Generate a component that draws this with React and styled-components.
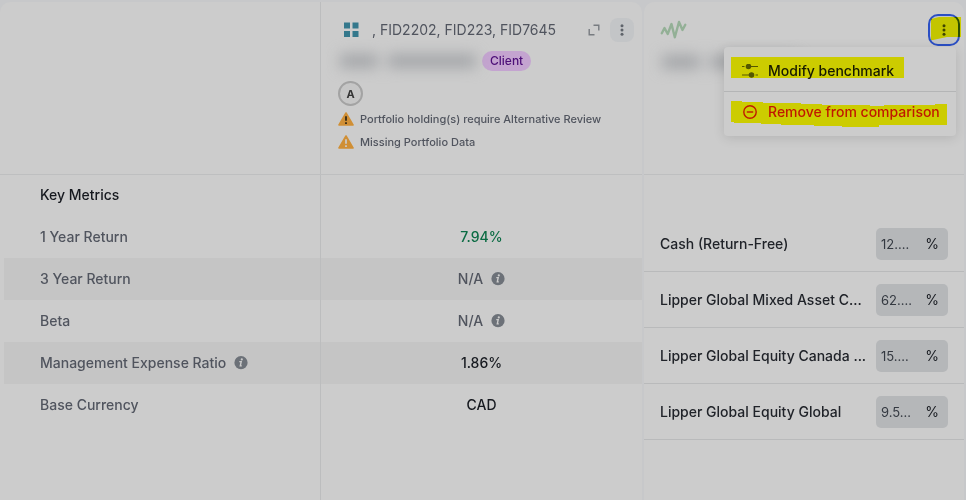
import React from "react";
import styled, { createGlobalStyle } from "styled-components";

const GlobalStyle = createGlobalStyle`
  *, *::before, *::after { box-sizing: border-box; }
  body {
    margin: 0;
    background: #c7c8ca;
    color: #16191f;
    font-family: Inter, "Liberation Sans", sans-serif;
    font-size: 14px;
    font-weight: 500;
    line-height: 20px;
  }
  button, input { font: inherit; color: inherit; }
`;

const Page = styled.main`
  display: grid;
  grid-template-columns: minmax(0, 2fr) minmax(0, 1fr);
  gap: 2px;
  min-height: 100vh;
  padding: 2px 1px 0 0;
`;

const MetricsPanel = styled.div`
  display: flex;
  flex-direction: column;
  background: linear-gradient(to right, transparent 50%, #bcbdbe 50%, #bcbdbe calc(50% + 1px), transparent 0) -1px 0 / 100% 100% no-repeat, #cccccc;
  border-radius: 10px 10px 0 0;
`;

const MetricsTable = styled.table`
  width: 100%;
  table-layout: fixed;
  border-collapse: collapse;
`;

const HeadCell = styled.th`
  height: 172px;
  padding: 16px 8px 0 17px;
  vertical-align: top;
  text-align: left;
  font-weight: 500;
`;

const MetricRow = styled.tr`
  height: 42px;
  border-top: ${(p) => (p.$ruled ? "1px solid #bebfc0" : "0")};
`;

const MetricName = styled.th`
  padding: 0 0 0 40px;
  text-align: left;
  font-weight: 500;
  color: ${(p) => (p.$strong ? "#16191f" : "#50545e")};
  background: ${(p) => (p.$shaded ? "linear-gradient(#c5c5c5, #c5c5c5) 4px 0 / calc(100% - 5px) 100% no-repeat" : "none")};
`;

const tones = { good: "#0b6b43", muted: "#50545e", plain: "#16191f" };

const MetricValue = styled.td`
  padding: 0;
  text-align: center;
  color: ${(p) => tones[p.$tone]};
  background: ${(p) => (p.$shaded ? "#c5c5c5" : "none")};
`;

const WithInfo = styled.span`
  display: inline-flex;
  align-items: center;
  gap: 8px;
`;

const HeaderBar = styled.div`
  display: flex;
  align-items: center;
  gap: 4px;
  height: 24px;
`;

const BrandSlot = styled.span`
  display: flex;
  flex: none;
  width: 30px;
  padding-left: 5px;
`;

const AccountIds = styled.span`
  flex: 1;
  min-width: 0;
  overflow: hidden;
  white-space: nowrap;
  text-overflow: ellipsis;
  color: #50545e;
  font-weight: 400;
`;

const IconButton = styled.button`
  display: flex;
  flex: none;
  align-items: center;
  justify-content: center;
  width: 24px;
  height: 24px;
  padding: 0;
  border: 0;
  border-radius: 8px;
  background: ${(p) => (p.$filled ? "#c3c5c7" : "transparent")};
  color: #5f646b;
`;

const FocusedButton = styled.button`
  position: relative;
  display: flex;
  flex: none;
  align-items: center;
  justify-content: center;
  width: 32px;
  height: 32px;
  margin-left: auto;
  padding: 0;
  border: 2px solid #2b4fc4;
  border-radius: 10px;
  background: #c3c5c7;
  color: #3f444b;
`;

const Marker = styled.svg`
  position: absolute;
  mix-blend-mode: multiply;
  pointer-events: none;
  top: ${(p) => p.$top}px;
  left: ${(p) => p.$left}px;
`;

const NameLine = styled.div`
  display: flex;
  align-items: center;
  height: 20px;
  margin-top: ${(p) => (p.$tight ? 6 : 9)}px;
`;

const HiddenName = styled.span`
  display: flex;
  gap: 10px;
  width: 144px;
  padding: 0 6px 0 2px;
  filter: blur(7px);
`;

const HiddenWord = styled.span`
  height: 14px;
  flex: ${(p) => p.$grow};
  background: #a4a6a9;
`;

const Tag = styled.span`
  padding: 0 8px;
  border-radius: 10px;
  background: #c4a4d0;
  color: #4d0f78;
  font-size: 12px;
`;

const Avatar = styled.div`
  display: flex;
  align-items: center;
  justify-content: center;
  width: 25px;
  height: 25px;
  margin: 10px 0 1px;
  border: 2px solid #a3a3a3;
  border-radius: 50%;
  background: #c6c6c6;
  color: #333333;
  font-size: 11px;
  font-weight: 700;
`;

const Notice = styled.div`
  display: flex;
  align-items: center;
  gap: 6px;
  height: 23px;
  color: #50545e;
  font-size: 11px;
  white-space: nowrap;
`;

const BenchmarkPanel = styled.section`
  position: relative;
  margin-right: 1px;
  background: #cccccc;
  border-radius: 10px 10px 0 0;
`;

const BenchmarkHead = styled.header`
  height: 173px;
  padding: 12px 4px 0 16px;
  border-bottom: 1px solid #bebfc0;
`;

const BenchmarkBar = styled.div`
  display: flex;
  align-items: center;
  height: 32px;
`;

const Holdings = styled.ul`
  margin: 41px 0 0;
  padding: 0;
  list-style: none;
`;

const Holding = styled.li`
  display: flex;
  align-items: center;
  justify-content: space-between;
  gap: 8px;
  height: 56px;
  padding: 0 16px;
  border-bottom: 1px solid #b9babb;
`;

const HoldingName = styled.label`
  min-width: 0;
  overflow: hidden;
  white-space: nowrap;
  text-overflow: ellipsis;
  color: #202329;
`;

const WeightField = styled.span`
  display: flex;
  flex: none;
  align-items: center;
  justify-content: space-between;
  width: 72px;
  height: 32px;
  padding: 0 9px 0 5px;
  border-radius: 5px;
  background: #b5b7b9;
  font-weight: 400;
`;

const WeightInput = styled.input`
  width: 36px;
  padding: 0;
  border: 0;
  outline: 0;
  background: transparent;
  color: #343941;
  font-size: 13px;
`;

const Menu = styled.div`
  position: absolute;
  top: 45px;
  right: 8px;
  width: 232px;
  padding: 4px 0;
  border-radius: 4px;
  background: #cccccc;
  box-shadow: 0 2px 12px rgba(0, 0, 0, 0.12);
`;

const MenuItem = styled.button`
  position: relative;
  display: flex;
  align-items: center;
  gap: 10px;
  width: 100%;
  height: 40px;
  padding: 0 16px 0 18px;
  border: 0;
  background: transparent;
  color: ${(p) => (p.$danger ? "#c01818" : "#16191f")};
  white-space: nowrap;
`;

const Divider = styled.hr`
  height: 1px;
  margin: 0;
  border: 0;
  background: #b4b5b6;
`;

const Dots = () => (
  <svg width="16" height="16" viewBox="0 0 16 16" fill="currentColor" aria-hidden="true">
    <circle cx="8" cy="3.8" r="1.5" />
    <circle cx="8" cy="8" r="1.5" />
    <circle cx="8" cy="12.2" r="1.5" />
  </svg>
);

const Squares = () => (
  <svg width="16" height="16" viewBox="0 0 16 16" fill="#34788c" aria-hidden="true">
    <path d="M1 0.5h6v6h-6zM9.5 0.5h6v6h-6zM1 9h6v6h-6zM9.5 9h6v6h-6z" />
  </svg>
);

const Expand = () => (
  <svg width="12" height="12" viewBox="0 0 12 12" fill="none" stroke="#777b80" strokeWidth="1.4" aria-hidden="true">
    <path d="M5.5 1.2h5.3v5.3M1.2 5v5.8h5.3" />
  </svg>
);

const Pulse = () => (
  <svg width="27" height="20" viewBox="0 0 27 20" fill="none" stroke="#93b096" strokeWidth="2.4" strokeLinecap="round" strokeLinejoin="round" aria-hidden="true">
    <path d="M1.8 13.2L4.5 8L7.7 14L11.5 4L14.8 17.3L19 2L22.5 10L25.3 4.8" />
  </svg>
);

const InfoIcon = () => (
  <svg width="14" height="14" viewBox="0 0 14 14" aria-hidden="true">
    <circle cx="7" cy="6.7" r="6.6" fill="#6c7178" />
    <circle cx="7.8" cy="3.4" r="1.1" fill="#cccccc" />
    <path d="M5.3 5.6h1.9l-0.9 4.3h1.5" fill="none" stroke="#cccccc" strokeWidth="1.4" />
  </svg>
);

const Warning = ({ mark }) => (
  <svg width="16" height="14" viewBox="0 0 16 14" aria-hidden="true">
    <path d="M8 1L15 13H1Z" fill="#d08f35" stroke="#d08f35" strokeWidth="1.6" strokeLinejoin="round" />
    <path d="M8 4.3v4.5M8 10.2v1.7" stroke={mark} strokeWidth="1.7" />
  </svg>
);

const Sliders = () => (
  <svg width="16" height="14" viewBox="0 0 16 14" fill="none" stroke="currentColor" strokeWidth="1.2" aria-hidden="true" opacity="0.65">
    <path d="M0 2.5h2.5M4 2.5h12M0 11h12M13.5 11h2.5" />
    <circle cx="6.5" cy="2.5" r="2.2" fill="currentColor" />
    <circle cx="9.5" cy="11" r="2.2" fill="currentColor" />
  </svg>
);

const Remove = () => (
  <svg width="16" height="16" viewBox="0 0 16 16" fill="none" stroke="currentColor" strokeWidth="1.4" aria-hidden="true">
    <circle cx="8" cy="8" r="6.2" />
    <path d="M4.8 8h6.4" />
  </svg>
);

const metrics = [
  { name: "1 Year Return", value: "7.94%", tone: "good" },
  { name: "3 Year Return", value: "N/A", tone: "muted", valueInfo: true },
  { name: "Beta", value: "N/A", tone: "muted", valueInfo: true },
  { name: "Management Expense Ratio", value: "1.86%", tone: "plain", nameInfo: true },
  { name: "Base Currency", value: "CAD", tone: "plain" },
];

const holdings = [
  { name: "Cash (Return-Free)", weight: "12.…" },
  { name: "Lipper Global Mixed Asset C...", weight: "62.…" },
  { name: "Lipper Global Equity Canada ...", weight: "15.…" },
  { name: "Lipper Global Equity Global", weight: "9.5…" },
];

const Labelled = ({ text, info }) =>
  info ? (
    <WithInfo>
      {text}
      <InfoIcon />
    </WithInfo>
  ) : (
    text
  );

const BlurredName = () => (
  <HiddenName>
    <HiddenWord $grow={3} />
    <HiddenWord $grow={7} />
  </HiddenName>
);

function PortfolioHeader() {
  return (
    <>
      <HeaderBar>
        <BrandSlot>
          <Squares />
        </BrandSlot>
        <AccountIds>, FID2202, FID223, FID7645</AccountIds>
        <IconButton aria-label="Expand">
          <Expand />
        </IconButton>
        <IconButton $filled aria-label="Portfolio options">
          <Dots />
        </IconButton>
      </HeaderBar>
      <NameLine>
        <BlurredName />
        <Tag>Client</Tag>
      </NameLine>
      <Avatar>A</Avatar>
      <Notice>
        <Warning mark="#2b2415" />
        Portfolio holding(s) require Alternative Review
      </Notice>
      <Notice>
        <Warning mark="#cccccc" />
        Missing Portfolio Data
      </Notice>
    </>
  );
}

function Metrics() {
  return (
    <MetricsPanel>
      <MetricsTable>
        <thead>
          <tr>
            <HeadCell />
            <HeadCell scope="col">
              <PortfolioHeader />
            </HeadCell>
          </tr>
        </thead>
        <tbody>
          <MetricRow $ruled>
            <MetricName $strong scope="row">Key Metrics</MetricName>
            <MetricValue $tone="plain" />
          </MetricRow>
          {metrics.map((m, i) => (
            <MetricRow key={m.name}>
              <MetricName $shaded={i % 2 === 1} scope="row">
                <Labelled text={m.name} info={m.nameInfo} />
              </MetricName>
              <MetricValue $tone={m.tone} $shaded={i % 2 === 1}>
                <Labelled text={m.value} info={m.valueInfo} />
              </MetricValue>
            </MetricRow>
          ))}
        </tbody>
      </MetricsTable>
    </MetricsPanel>
  );
}

function Benchmark() {
  return (
    <BenchmarkPanel>
      <BenchmarkHead>
        <BenchmarkBar>
          <Pulse />
          <FocusedButton aria-label="Benchmark options" aria-expanded="true">
            <Dots />
            <Marker $top={1} $left={1} width="30" height="23" viewBox="0 0 30 23" aria-hidden="true">
              <path d="M0 2L8 0H30V20H16L2 23H0Z" fill="#ffff00" />
            </Marker>
          </FocusedButton>
        </BenchmarkBar>
        <NameLine $tight>
          <BlurredName />
        </NameLine>
      </BenchmarkHead>
      <Holdings>
        {holdings.map((h, i) => (
          <Holding key={h.name}>
            <HoldingName htmlFor={`weight-${i}`}>{h.name}</HoldingName>
            <WeightField>
              <WeightInput id={`weight-${i}`} defaultValue={h.weight} />
              %
            </WeightField>
          </Holding>
        ))}
      </Holdings>
      <Menu role="menu">
        <MenuItem role="menuitem">
          <Sliders />
          Modify benchmark
          <Marker $top={6} $left={7} width="173" height="21" viewBox="0 0 173 21" aria-hidden="true">
            <path d="M0 0H173V21H0Z" fill="#ffff00" />
          </Marker>
        </MenuItem>
        <Divider />
        <MenuItem role="menuitem" $danger>
          <Remove />
          Remove from comparison
          <Marker $top={9} $left={7} width="216" height="26" viewBox="0 0 216 26" aria-hidden="true">
            <path d="M0 0H11V1H32V2H70V3H91V4H139V5H153V4H204V3H216V24H148V26H111V25H83V24H50V23H30V22H3V21H0Z" fill="#ffff00" />
          </Marker>
        </MenuItem>
      </Menu>
    </BenchmarkPanel>
  );
}

export default function App() {
  return (
    <>
      <GlobalStyle />
      <Page>
        <Metrics />
        <Benchmark />
      </Page>
    </>
  );
}
